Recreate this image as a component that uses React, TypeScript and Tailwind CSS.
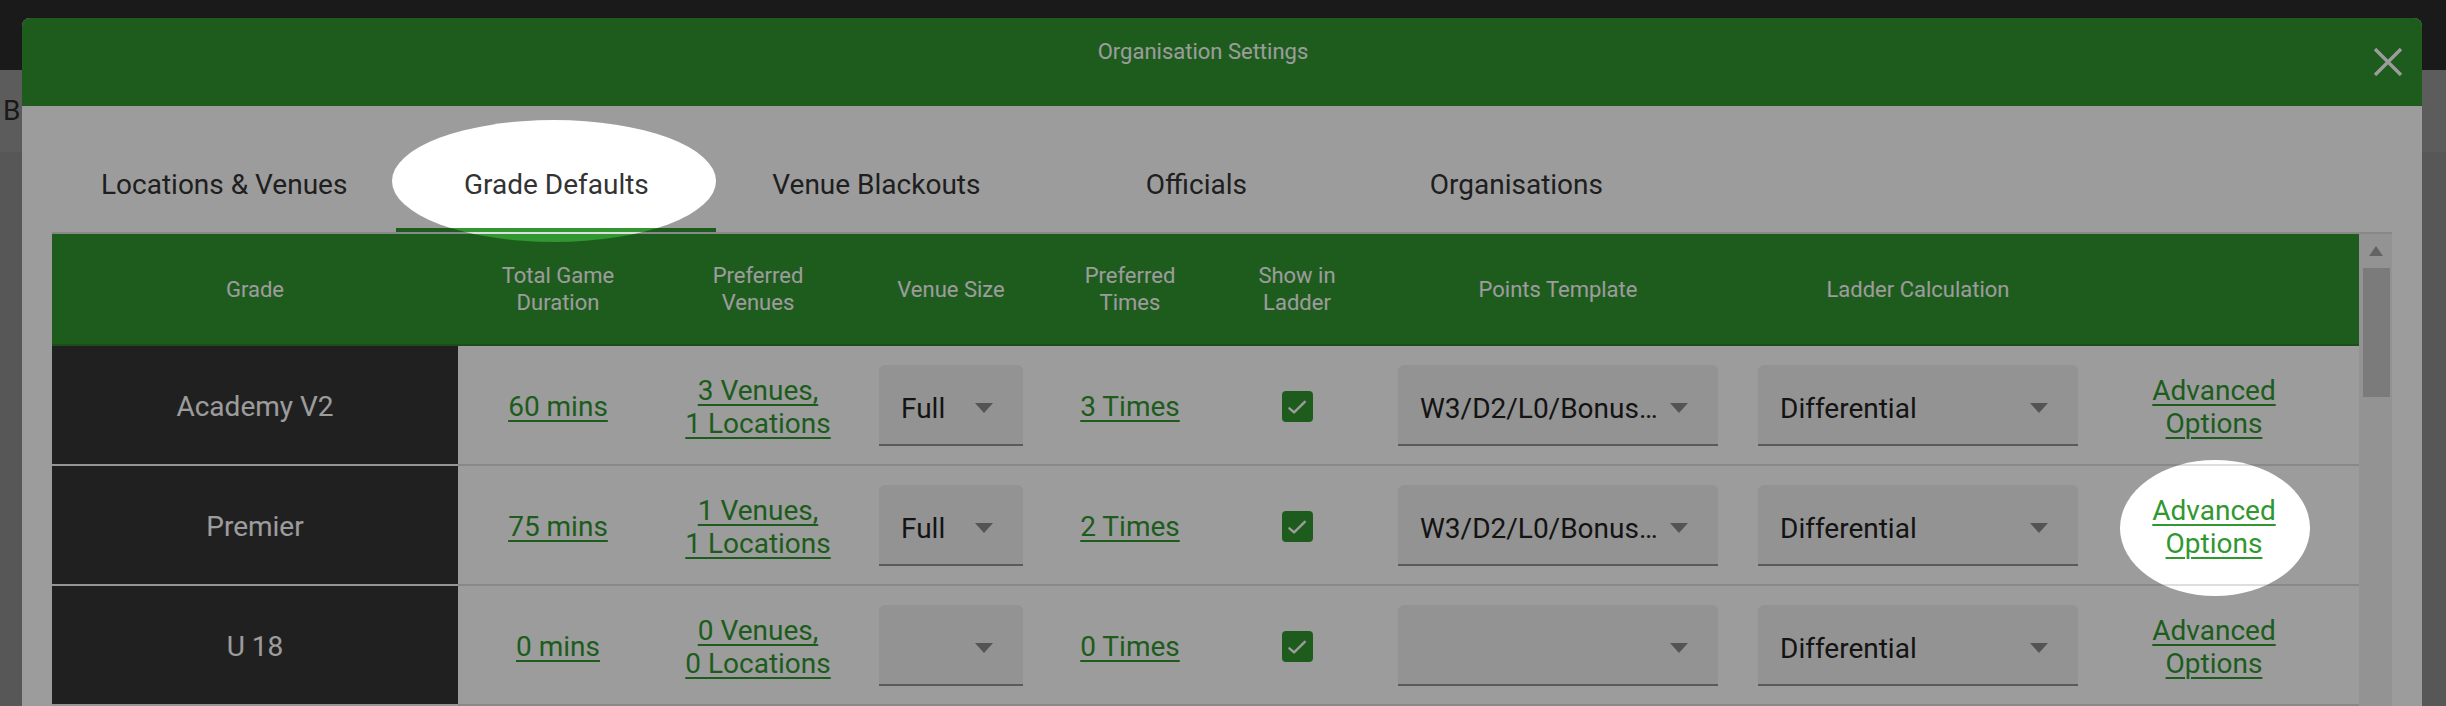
import type { ReactNode } from "react";

type Row = {
  grade: string;
  duration: string;
  venues: string;
  locations: string;
  size: string;
  times: string;
  points: string;
  ladder: string;
};

const rows: Row[] = [
  {
    grade: "Academy V2",
    duration: "60 mins",
    venues: "3 Venues,",
    locations: "1 Locations",
    size: "Full",
    times: "3 Times",
    points: "W3/D2/L0/Bonus…",
    ladder: "Differential",
  },
  {
    grade: "Premier",
    duration: "75 mins",
    venues: "1 Venues,",
    locations: "1 Locations",
    size: "Full",
    times: "2 Times",
    points: "W3/D2/L0/Bonus…",
    ladder: "Differential",
  },
  {
    grade: "U 18",
    duration: "0 mins",
    venues: "0 Venues,",
    locations: "0 Locations",
    size: "",
    times: "0 Times",
    points: "",
    ladder: "Differential",
  },
];

const tabs = ["Locations & Venues", "Grade Defaults", "Venue Blackouts", "Officials", "Organisations"];

// column widths measured off the screenshot
const cols =
  "grid grid-cols-[406px_200px_200px_186px_172px_162px_360px_360px_232px_1fr]";

function Caret() {
  return (
    <svg width="18" height="10" viewBox="0 0 18 10" aria-hidden="true">
      <path d="M0 0 L18 0 L9 10 Z" fill="#8a8a8a" />
    </svg>
  );
}

function Select({ value, width }: { value: string; width: string }) {
  return (
    <div
      className={`${width} flex h-[81px] items-center justify-between rounded-t-[6px] border-b-2 border-[#939393] bg-[#f0f0f0] pt-[8px] pr-[30px] pl-[22px]`}
    >
      <span className="truncate pt-[2px] text-[28px] text-[#222]">{value}</span>
      <Caret />
    </div>
  );
}

function Link({ children }: { children: ReactNode }) {
  return (
    <a className="cursor-pointer text-center text-[28px] leading-[33px] text-[#319731] underline decoration-2 underline-offset-[4px]">
      {children}
    </a>
  );
}

function Checkbox() {
  return (
    <div className="flex h-[31px] w-[31px] items-center justify-center rounded-[4px] bg-[#319731]">
      <svg width="26" height="26" viewBox="0 0 24 24" fill="none" aria-hidden="true">
        <path d="M5 13.2 L9.3 17 L19.2 7.2" stroke="#ffffff" strokeWidth="2.2" strokeLinecap="round" strokeLinejoin="round" />
      </svg>
    </div>
  );
}

function Cell({ children }: { children: ReactNode }) {
  return <div className="flex items-center justify-center">{children}</div>;
}

function BodyCell({ children }: { children: ReactNode }) {
  return <div className="flex items-center justify-center pt-[3px]">{children}</div>;
}

export default function App() {
  return (
    <div
      className="relative flex h-[706px] w-[2446px] flex-col overflow-hidden bg-[#8e8e8e]"
      style={{ fontFamily: "Roboto, 'Liberation Sans', sans-serif" }}
    >
      {/* page behind the dialog */}
      <div className="h-[70px] bg-[#2c2c2c]" />
      <div className="flex h-[82px] items-center bg-[#979797] pl-[3px] text-[28px] text-[#2a2a2a]">B</div>

      {/* dialog */}
      <div className="absolute top-[18px] left-[22px] flex h-[720px] w-[2400px] flex-col overflow-hidden rounded-t-[8px] bg-white">
        <header className="flex h-[88px] shrink-0 items-start bg-[#319731]">
          <h2 className="flex-1 pt-[17px] pl-[11px] text-center text-[22px] text-white">Organisation Settings</h2>
          <button className="mt-[30px] mr-[19px] h-[28px] w-[30px] shrink-0" aria-label="Close">
            <svg width="30" height="28" viewBox="0 0 30 28" aria-hidden="true">
              <path d="M2 1 L28 27 M28 1 L2 27" stroke="#ffffff" strokeWidth="3.4" />
            </svg>
          </button>
        </header>

        <div className="flex flex-1 flex-col px-[30px] pt-[32px]">
          <nav className="flex h-[94px]">
            {tabs.map((t) => (
              <div
                key={t}
                className="relative flex min-w-[320px] items-center justify-center px-[49px] text-[28px] text-[#333]"
              >
                {t}
                {t === "Grade Defaults" && (
                  <span className="absolute right-0 bottom-0 left-0 h-[4px] bg-[#319731]" />
                )}
              </div>
            ))}
          </nav>

          <div className="flex border-t-2 border-[#dedede]">
            <div className="flex-1">
              <div className={`${cols} h-[112px] border-b-2 border-[#2b822b] bg-[#319731] text-center text-[22px] leading-[27px] text-white`}>
                <Cell>Grade</Cell>
                <Cell>
                  Total Game
                  <br />
                  Duration
                </Cell>
                <Cell>
                  Preferred
                  <br />
                  Venues
                </Cell>
                <Cell>Venue Size</Cell>
                <Cell>
                  Preferred
                  <br />
                  Times
                </Cell>
                <Cell>
                  Show in
                  <br />
                  Ladder
                </Cell>
                <Cell>Points Template</Cell>
                <Cell>Ladder Calculation</Cell>
                <div />
                <div />
              </div>

              {rows.map((r) => (
                <div key={r.grade} className={`${cols} h-[120px]`}>
                  <div className="flex items-center justify-center border-b-2 border-[#f4f4f4] bg-[#353535] pt-[3px] text-[28px] text-white">
                    {r.grade}
                  </div>
                  <div className="col-span-9 grid grid-cols-[200px_200px_186px_172px_162px_360px_360px_232px_1fr] border-b-2 border-[#dedede]">
                    <BodyCell>
                      <Link>{r.duration}</Link>
                    </BodyCell>
                    <BodyCell>
                      <Link>
                        {r.venues}
                        <br />
                        {r.locations}
                      </Link>
                    </BodyCell>
                    <Cell>
                      <Select value={r.size} width="w-[144px]" />
                    </Cell>
                    <BodyCell>
                      <Link>{r.times}</Link>
                    </BodyCell>
                    <BodyCell>
                      <Checkbox />
                    </BodyCell>
                    <Cell>
                      <Select value={r.points} width="w-[320px]" />
                    </Cell>
                    <Cell>
                      <Select value={r.ladder} width="w-[320px]" />
                    </Cell>
                    <BodyCell>
                      <Link>
                        Advanced
                        <br />
                        Options
                      </Link>
                    </BodyCell>
                    <div />
                  </div>
                </div>
              ))}
            </div>

            {/* scrollbar */}
            <div className="flex w-[33px] shrink-0 flex-col bg-[#f1f1f1]">
              <div className="flex h-[34px] items-center justify-center">
                <svg width="14" height="10" viewBox="0 0 14 10" aria-hidden="true">
                  <path d="M7 0 L14 10 L0 10 Z" fill="#a3a3a3" />
                </svg>
              </div>
              <div className="mr-[2px] ml-[4px] h-[129px] bg-[#cacaca]" />
            </div>
          </div>
        </div>
      </div>

      {/* tour overlay with two spotlights */}
      <svg className="pointer-events-none absolute inset-0" width="2446" height="706" aria-hidden="true">
        <defs>
          <mask id="spot">
            <rect width="2446" height="706" fill="white" />
            <ellipse cx="554" cy="181" rx="162" ry="61" fill="black" />
            <ellipse cx="2215" cy="528" rx="95" ry="68" fill="black" />
          </mask>
        </defs>
        <rect width="2446" height="706" fill="rgba(0,0,0,0.39)" mask="url(#spot)" />
      </svg>
    </div>
  );
}
